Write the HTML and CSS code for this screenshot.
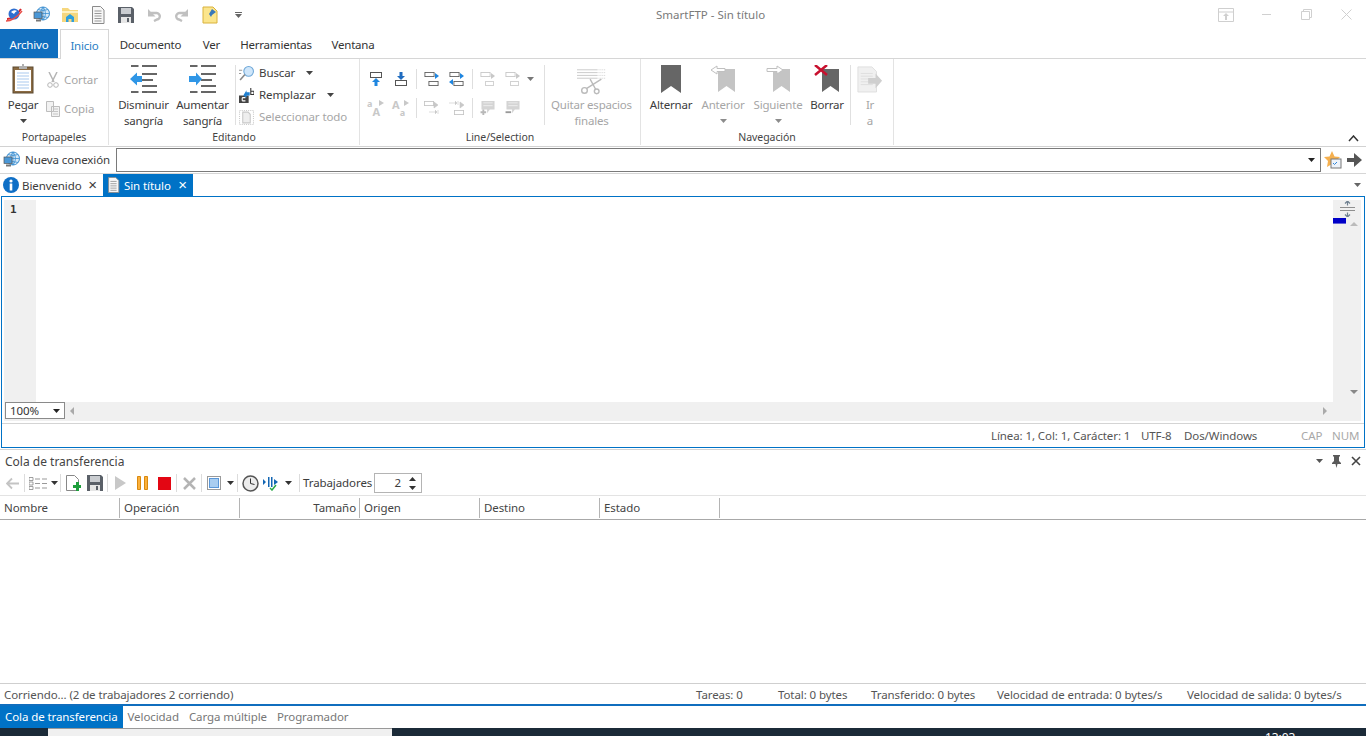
FILE: index.html
```html
<!DOCTYPE html>
<html lang="es">
<head>
<meta charset="utf-8">
<title>SmartFTP - Sin título</title>
<link rel="stylesheet" href="styles.css">
</head>
<body>
<svg class="defs" width="0" height="0" aria-hidden="true">
  <symbol id="globe" viewBox="0 0 18 18">
    <circle cx="10" cy="7.5" r="6.5" fill="#d6e9f8" stroke="#3a8ed0"/>
    <path d="M3.5 7.5h13M10 1v13M5 3.5q5 2 10 0M5 11.5q5-2 10 0M10 1q-5 6.500 0 13M10 1q5 6.500 0 13" fill="none" stroke="#3a8ed0" stroke-width=".8"/>
    <rect x="1" y="6" width="8" height="6.500" fill="#4a97d6" stroke="#555" stroke-width=".7"/>
    <path d="M3 13.500h5v2H3z" fill="#777"/>
  </symbol>
  <symbol id="doc" viewBox="0 0 14 18">
    <path d="M1.500.5h8l3.500 3.500v13.500H1.500z" fill="#f7f7f7" stroke="#8a8a8a"/>
    <path d="M3.500 5h7M3.500 7.500h7M3.500 10h7M3.500 12.500h7M3.500 15h7" stroke="#999"/>
  </symbol>
  <symbol id="save" viewBox="0 0 16 16">
    <path d="M0 0h14l2 2v14H0z" fill="#5a6068"/>
    <rect x="3" y="1" width="10" height="6" fill="#c9ccd0"/>
    <rect x="3" y="10" width="10" height="6" fill="#e6e6e6"/>
    <rect x="9" y="11" width="2" height="4" fill="#5a6068"/>
  </symbol>
  <symbol id="ind" viewBox="0 0 28 28">
    <path d="M1 0h7.500v2H1zM12 0h15v2H12zM12 8h15v2H12zM12 14h11v2H12zM12 20h15v2H12zM1 26h7.500v2H1zM12 26h15v2H12z" fill="#666"/>
  </symbol>
  <symbol id="slot" viewBox="0 0 12 6">
    <rect x=".5" y=".5" width="11" height="5" fill="#fff" stroke="currentColor"/>
  </symbol>
  <symbol id="mark" viewBox="0 0 20 28">
    <path d="M0 0h20v28L10 21 0 28z" fill="currentColor"/>
  </symbol>
  <symbol id="caret" viewBox="0 0 7 4">
    <path d="M0 0h7L3.500 4z" fill="currentColor"/>
  </symbol>
  <symbol id="undo" viewBox="0 0 14 14">
    <path d="M4 5h5a3.200 3.200 0 0 1 1 6.500L7 13" fill="none" stroke="#c0c0c0" stroke-width="2.400"/>
    <path d="M1 1v7.500h7.500z" fill="#c0c0c0"/>
  </symbol>
</svg>

<header class="titlebar">
  <div class="quick">
    <span class="qbtn"><svg class="i18" viewBox="0 0 18 18"><path d="M2 13Q9 13 16 3" fill="none" stroke="#d8262c" stroke-width="2"/><circle cx="9" cy="8" r="5.500" fill="#2f6fd0"/><path d="M6 6q3-3 6-1-2 1-3 3z" fill="#fff"/><path d="M1 15Q9 15 17 5" fill="none" stroke="#e8504a" stroke-width="1.500"/></svg></span>
    <span class="qbtn"><svg class="i18"><use href="#globe"/></svg></span>
    <span class="qbtn"><svg class="i18" viewBox="0 0 18 18"><path d="M1 2h6l2 2h8v12H1z" fill="#f6d77e"/><path d="M1 5h16v2H1z" fill="#fff2c2"/><path d="M5 11l4-3 4 3v5h-2.500v-3h-3v3H5z" fill="#2f9fdc"/></svg></span>
    <span class="qbtn"><svg class="i18"><use href="#doc"/></svg></span>
    <span class="qbtn"><svg class="i16"><use href="#save"/></svg></span>
    <span class="qbtn"><svg class="i14"><use href="#undo"/></svg></span>
    <span class="qbtn"><svg class="i14 flip"><use href="#undo"/></svg></span>
    <span class="qbtn"><svg class="i18" viewBox="0 0 18 18"><path d="M2 1h10l4 4v12H2z" fill="#fbe58c" stroke="#d9b23c"/><path d="M8 8l3-5 4 3-4 3-1 2z" fill="#3a78b8"/></svg></span>
    <span class="qbtn"><svg class="caret-lined" viewBox="0 0 7 6"><path d="M0 0h7v1H0zM0 2h7L3.500 6z" fill="#666"/></svg></span>
  </div>
  <div class="title">SmartFTP - Sin título</div>
  <div class="winctl">
    <span class="wbtn"><svg class="i16" viewBox="0 0 16 14"><path d="M.5.500h15v13H.5zM.5 4h15" fill="#fff" stroke="#cfcfcf"/><path d="M8 5l3 3H9v4H7V8H5z" fill="#cfcfcf"/></svg></span>
    <span class="wbtn"><svg class="i11" viewBox="0 0 11 11"><path d="M1 5.500h9" stroke="#d0d0d0"/></svg></span>
    <span class="wbtn"><svg class="i11" viewBox="0 0 11 11"><path d="M2.500 2.500V.5h8v8h-2M.5 2.500h8v8h-8z" fill="none" stroke="#d0d0d0"/></svg></span>
    <span class="wbtn"><svg class="i11" viewBox="0 0 11 11"><path d="M.5.500l10 10M10.500.5l-10 10" stroke="#d0d0d0"/></svg></span>
  </div>
</header>

<nav class="tabs">
  <span class="tab-file">Archivo</span>
  <span class="tab tab-on">Inicio</span>
  <span class="tab tab-doc">Documento</span>
  <span class="tab tab-ver">Ver</span>
  <span class="tab tab-her">Herramientas</span>
  <span class="tab">Ventana</span>
</nav>

<section class="ribbon">
  <div class="group g-clip">
    <div class="group-body">
      <div class="large w-pegar">
        <svg class="big-icon clip-icon" viewBox="0 0 22 30"><rect x="1" y="3" width="20" height="26" fill="#8a6a42" stroke="#5c4a30"/><rect x="3" y="6" width="16" height="21" fill="#fff"/><path d="M5 9h12M5 12h12M5 15h12M5 18h12M5 21h12M5 24h12" stroke="#a9c9ee"/><path d="M7 2h3V0h2v2h3v3H7z" fill="#b0b0b0"/></svg>
        <span class="lbl">Pegar</span>
        <svg class="caret"><use href="#caret"/></svg>
      </div>
      <div class="small-stack">
        <div class="small off"><svg class="s-icon" viewBox="0 0 14 16"><path d="M3 0l5 10M11 0L6 10" stroke="#b5b5b5" stroke-width="1.500"/><circle cx="4" cy="13" r="2.300" fill="none" stroke="#b5b5b5"/><circle cx="10" cy="13" r="2.300" fill="none" stroke="#b5b5b5"/></svg>Cortar</div>
        <div class="small off"><svg class="s-icon" viewBox="0 0 14 16"><path d="M.5.500h7v10h-7zM5.500 5.500h8v10h-8z" fill="#f2f2f2" stroke="#bdbdbd"/><path d="M7 8h5M7 10.500h5M7 13h5" stroke="#c4c4c4"/></svg>Copia</div>
      </div>
    </div>
    <div class="group-name">Portapapeles</div>
  </div>

  <div class="group g-edit">
    <div class="group-body">
      <div class="large w-ind">
        <svg class="big-icon"><use href="#ind"/><path d="M0 14l7-6.500V11h5v6H7v3.500z" fill="#2f96e6"/></svg>
        <span class="lbl">Disminuir</span><span class="lbl">sangría</span>
      </div>
      <div class="large w-ind">
        <svg class="big-icon"><use href="#ind"/><path d="M13 14L7 7.500V11H0v6h7v3.500z" fill="#2f96e6"/></svg>
        <span class="lbl">Aumentar</span><span class="lbl">sangría</span>
      </div>
      <div class="vsep vsep-edit"></div>
      <div class="small-stack tight">
        <div class="small"><svg class="s-icon" viewBox="0 0 14 14"><circle cx="9" cy="5" r="4.500" fill="#cfe6fa" stroke="#6fa8d8"/><path d="M5.500 8L1 13" stroke="#888" stroke-width="1.500"/><path d="M0 4h3M0 7h2" stroke="#999"/></svg>Buscar<svg class="caret inline"><use href="#caret"/></svg></div>
        <div class="small"><svg class="s-icon" viewBox="0 0 14 14"><rect x="0" y="7" width="9" height="7" fill="#444"/><path d="M4 7l3-5v2h3v3H7v2z" fill="#1f7fd0"/><path d="M11 0v6h3V3h-3" fill="none" stroke="#333"/><path d="M3 9h3M3 12h3M3 9v3" stroke="#fff" fill="none"/></svg>Remplazar<svg class="caret inline"><use href="#caret"/></svg></div>
        <div class="small off"><svg class="s-icon" viewBox="0 0 14 14"><rect x=".5" y=".5" width="13" height="13" fill="none" stroke="#ccc" stroke-dasharray="1 1"/><path d="M3.500 2h5l2 2v8h-7z" fill="#eee" stroke="#c8c8c8"/></svg>Seleccionar todo</div>
      </div>
    </div>
    <div class="group-name">Editando</div>
  </div>

  <div class="group g-line">
    <div class="group-body">
      <div class="icon-grid">
        <div class="icon-row">
          <span class="gbtn blue"><svg viewBox="0 0 16 14"><use href="#slot" width="12" height="6" x="2" y="0"/><path d="M8 6l4 4H9.500v4h-3v-4H4z" fill="#1f86e0"/></svg></span>
          <span class="gbtn blue"><svg viewBox="0 0 16 14"><use href="#slot" width="12" height="6" x="2" y="8"/><path d="M8 8l4-4H9.500V0h-3v4H4z" fill="#1f6cc0"/></svg></span>
          <i class="sep"></i>
          <span class="gbtn blue"><svg viewBox="0 0 16 14"><use href="#slot" width="11" height="5" y="0"/><use href="#slot" width="11" height="5" x="4" y="9"/><path d="M11 1l4 3-4 3z" fill="#1f86e0"/></svg></span>
          <span class="gbtn blue"><svg viewBox="0 0 16 14"><use href="#slot" width="11" height="5" y="0"/><use href="#slot" width="11" height="5" x="4" y="9"/><path d="M11 1l4 3-4 3zM4 7L0 10l4 3z" fill="#1f86e0"/></svg></span>
          <i class="sep"></i>
          <span class="gbtn"><svg viewBox="0 0 16 14"><use href="#slot" width="11" height="5" y="0"/><use href="#slot" width="9" height="5" x="5" y="9"/><path d="M11 1l4 3-4 3z" fill="#c8c8c8"/></svg></span>
          <span class="gbtn"><svg viewBox="0 0 16 14"><use href="#slot" width="11" height="5" y="0"/><use href="#slot" width="9" height="5" x="5" y="9"/><path d="M11 1l4 3-4 3z" fill="#c8c8c8"/></svg></span>
          <svg class="caret grid-caret"><use href="#caret"/></svg>
        </div>
        <div class="icon-row">
          <span class="gbtn aa"><span class="aa-small">a</span><span class="aa-big aa-end">A</span><svg class="aa-arrow" viewBox="0 0 5 6"><path d="M0 0l5 3-5 3z" fill="#c8c8c8"/></svg></span>
          <span class="gbtn aa"><span class="aa-big">A</span><span class="aa-small aa-end">a</span><svg class="aa-arrow" viewBox="0 0 5 6"><path d="M0 0l5 3-5 3z" fill="#c8c8c8"/></svg></span>
          <i class="sep"></i>
          <span class="gbtn"><svg viewBox="0 0 16 14"><use href="#slot" width="10" height="5" y="0"/><path d="M10 1l4 3-4 3zM5 11h6M11 9l2 2-2 2M14 9v4" fill="#c8c8c8" stroke="#c8c8c8" stroke-width=".6"/></svg></span>
          <span class="gbtn"><svg viewBox="0 0 16 14"><use href="#slot" width="10" height="5" x="5" y="9"/><path d="M0 2h6M6 0l2 2-2 2M9 0v4M11 1l4 3-4 3z" fill="#c8c8c8" stroke="#c8c8c8" stroke-width=".6"/></svg></span>
          <i class="sep"></i>
          <span class="gbtn"><svg viewBox="0 0 16 15"><path d="M1 0h14v9H10l-3 4v-4H1z" fill="#d4d4d4"/><path d="M3 2h10M3 5h10" stroke="#eee"/><path d="M0 11h6v2H0zM2 9h2v6H2z" fill="#b8b8b8"/></svg></span>
          <span class="gbtn"><svg viewBox="0 0 16 15"><path d="M1 0h14v9H10l-3 4v-4H1z" fill="#d4d4d4"/><path d="M3 2h10M3 5h10" stroke="#eee"/><path d="M0 11h6v2H0z" fill="#999"/></svg></span>
        </div>
      </div>
      <div class="vsep"></div>
      <div class="large off w-trim">
        <svg class="big-icon trim-icon" viewBox="0 0 32 27"><path d="M0 1h22M0 4h22M0 7h22M0 10h22" stroke="#c9c9c9"/><path d="M23 1h8M23 4h8M23 7h8M23 10h8" stroke="#d0d0d0" stroke-dasharray="1 1"/><path d="M26 11L10 21M14 11l6 11" stroke="#bbb" stroke-width="1.500"/><circle cx="8" cy="23" r="3" fill="none" stroke="#bbb" stroke-width="1.500"/><circle cx="21" cy="24" r="2.500" fill="none" stroke="#bbb" stroke-width="1.500"/></svg>
        <span class="lbl">Quitar espacios</span><span class="lbl">finales</span>
      </div>
    </div>
    <div class="group-name">Line/Selection</div>
  </div>

  <div class="group g-nav">
    <div class="group-body">
      <div class="large w-alt">
        <svg class="big-icon mark-icon"><use href="#mark"/></svg>
        <span class="lbl">Alternar</span>
      </div>
      <div class="large off w-ant">
        <svg class="big-icon nav-icon" viewBox="0 0 26 28"><path d="M8 4h17v23l-8.500-6L8 27z" fill="#c4c4c4"/><path d="M1 5l6-4v2.500h8v3H7V9z" fill="#fff" stroke="#c0c0c0"/></svg>
        <span class="lbl">Anterior</span>
        <svg class="caret"><use href="#caret"/></svg>
      </div>
      <div class="large off w-sig">
        <svg class="big-icon nav-icon" viewBox="0 0 26 28"><path d="M8 4h17v23l-8.500-6L8 27z" fill="#c4c4c4"/><path d="M18 5l-6-4v2.500H2v3h10V9z" fill="#fff" stroke="#c0c0c0"/></svg>
        <span class="lbl">Siguiente</span>
        <svg class="caret"><use href="#caret"/></svg>
      </div>
      <div class="large w-bor">
        <svg class="big-icon nav-icon" viewBox="0 0 26 28"><path d="M8 4h17v23l-8.500-6L8 27z" fill="#666"/><path d="M1 0l12 10M13 0L1 10" stroke="#c8102e" stroke-width="2.500"/></svg>
        <span class="lbl">Borrar</span>
      </div>
      <div class="vsep vsep-nav"></div>
      <div class="large off w-ir">
        <svg class="big-icon nav-icon" viewBox="0 0 28 28"><path d="M1 1h15l5 5v22H1z" fill="#f0f0f0" stroke="#ddd"/><path d="M4 8h13M4 11h13M4 14h13M4 17h13M4 20h13" stroke="#ddd"/><path d="M12 13h8V8l7 8-7 8v-5h-8z" fill="#cfcfcf"/></svg>
        <span class="lbl">Ir</span><span class="lbl">a</span>
      </div>
    </div>
    <div class="group-name">Navegación</div>
  </div>
  <svg class="collapse" viewBox="0 0 11 7"><path d="M1 6l4.500-5L10 6" fill="none" stroke="#333" stroke-width="1.500"/></svg>
</section>

<div class="addr">
  <svg class="i18 addr-globe"><use href="#globe"/></svg>
  <span class="addr-label">Nueva conexión</span>
  <div class="addr-input"><svg class="caret dark-c"><use href="#caret"/></svg></div>
  <svg class="i18 addr-star" viewBox="0 0 18 18"><path d="M8 0l2.500 5.500L16 6l-4 4 1 6-5-3-5 3 1-6-4-4 5.500-.5z" fill="#f5b04f"/><rect x="7" y="8" width="10" height="9" fill="#eef3fa" stroke="#777"/><path d="M9 12l1.500 1.500L13 11" fill="none" stroke="#2f86d8"/></svg>
  <svg class="addr-go" viewBox="0 0 15 14"><path d="M0 5h7V0l8 7-8 7V9H0z" fill="#555"/></svg>
</div>

<div class="doctabs">
  <span class="dtab">
    <svg class="i16" viewBox="0 0 16 16"><circle cx="8" cy="8" r="8" fill="#0f6fc6"/><rect x="6.700" y="6.500" width="2.600" height="7" fill="#fff"/><circle cx="8" cy="4" r="1.600" fill="#fff"/></svg>
    <span class="dtab-text">Bienvenido</span><b class="x">×</b>
  </span>
  <span class="dtab dtab-on">
    <svg class="i-doc"><use href="#doc"/></svg>
    <span class="dtab-text">Sin título</span><b class="x">×</b>
  </span>
  <svg class="caret strip-caret"><use href="#caret"/></svg>
</div>

<main class="editor">
  <div class="edit-area">
    <div class="gutter">1</div>
    <div class="code"></div>
    <div class="vscroll">
      <svg class="split" viewBox="0 0 15 16"><path d="M0 6.500h15M0 9.500h15" stroke="#8f8f8f" stroke-width="1.200"/><path d="M7.500 0v4.500M5 2.500l2.500-2.500 2.500 2.500M7.500 11.500v4.500M5 13.500l2.500 2.500 2.500-2.500" fill="none" stroke="#6f8090" stroke-width="1.200"/></svg>
      <div class="mark-row"><i class="bluemark"></i><svg class="sc-arrow sc-up" viewBox="0 0 8 4"><path d="M4 0l4 4H0z" fill="#bbb"/></svg></div>
      <svg class="sc-arrow sc-down" viewBox="0 0 8 4"><path d="M4 4l4-4H0z" fill="#888"/></svg>
    </div>
  </div>
  <div class="hscroll">
    <div class="zoombox">100%<svg class="caret dark-c"><use href="#caret"/></svg></div>
    <svg class="h-arrow h-left" viewBox="0 0 4 8"><path d="M0 4l4-4v8z" fill="#aaa"/></svg>
    <svg class="h-arrow h-right" viewBox="0 0 4 8"><path d="M4 4L0 0v8z" fill="#aaa"/></svg>
  </div>
  <div class="edit-status">
    <span class="es-pos">Línea: 1, Col: 1, Carácter: 1</span>
    <span class="es-enc">UTF-8</span>
    <span class="es-eol">Dos/Windows</span>
    <span class="es-cap">CAP</span>
    <span class="es-num">NUM</span>
  </div>
</main>

<section class="panel">
  <div class="panel-title">
    <span class="panel-name">Cola de transferencia</span>
    <svg class="caret panel-caret"><use href="#caret"/></svg>
    <svg class="pin" viewBox="0 0 9 13"><path d="M1 0h7v1L7 2v4l2 2v1H5.500L4.500 13 3.500 9H0V8l2-2V2L1 1z" fill="#5a5a5a"/></svg>
    <svg class="close" viewBox="0 0 10 10"><path d="M1 1l8 8M9 1l-8 8" stroke="#444" stroke-width="1.600"/></svg>
  </div>
  <div class="toolbar">
    <span class="tb w-back"><svg viewBox="0 0 13 12" class="t13"><path d="M6 1L1 6l5 5M1 6h12" fill="none" stroke="#c4c4c4" stroke-width="1.800"/></svg></span>
    <i class="tsep"></i>
    <span class="tb w-list"><svg viewBox="0 0 18 13" class="t18"><path d="M0 .5h4v3H0zM0 5h4v3H0zM0 9.500h4v3H0z" fill="none" stroke="#888" stroke-width=".8"/><path d="M6 2h5M13 2h5M6 6.500h5M13 6.500h5M6 11h5M13 11h5" stroke="#999" stroke-width="1.200"/></svg><svg class="caret tcaret"><use href="#caret"/></svg></span>
    <i class="tsep"></i>
    <span class="tb w-22 lead"><svg viewBox="0 0 15 17" class="t15"><path d="M.5.500h8l4 4v11H.5z" fill="#fff" stroke="#888"/><path d="M10 7h3v3h3v3h-3v3h-3v-3H7v-3h3z" fill="#1e9e3c"/></svg></span>
    <span class="tb w-22"><svg class="t16"><use href="#save"/></svg></span>
    <i class="tsep lead"></i>
    <span class="tb w-22 lead"><svg viewBox="0 0 11 14" class="t11"><path d="M0 0l11 7-11 7z" fill="#c8c8c8"/></svg></span>
    <span class="tb w-22"><svg viewBox="0 0 11 14" class="t11"><path d="M.5.500h3v13h-3zM7.500.5h3v13h-3z" fill="#fbb03b" stroke="#d9890f"/></svg></span>
    <span class="tb w-22"><svg viewBox="0 0 13 13" class="t13"><rect width="13" height="13" fill="#e30613"/></svg></span>
    <i class="tsep lead"></i>
    <span class="tb w-24"><svg viewBox="0 0 13 13" class="t13"><path d="M1 1l11 11M12 1L1 12" stroke="#b4b4b4" stroke-width="2.500"/></svg></span>
    <i class="tsep"></i>
    <span class="tb w-box"><svg viewBox="0 0 14 14" class="t14"><rect x=".5" y=".5" width="13" height="13" fill="#fff" stroke="#9a9a9a"/><rect x="2.500" y="2.500" width="9" height="9" fill="#a9cdf0" stroke="#5a97d8"/></svg><svg class="caret tcaret"><use href="#caret"/></svg></span>
    <i class="tsep"></i>
    <span class="tb w-clock"><svg viewBox="0 0 17 17" class="t17"><circle cx="8.500" cy="8.500" r="7.500" fill="#ececec" stroke="#555" stroke-width="1.500"/><path d="M8.500 3.500v5l4 1" fill="none" stroke="#333"/></svg></span>
    <span class="tb w-work"><svg viewBox="0 0 16 14" class="t16"><path d="M0 3l3 3-3 3zM5 1h1.500v10H5zM8 1h1.500v10H8z" fill="#1366b3"/><path d="M11 3l4 3-4 3z" fill="#1366b3"/><path d="M7 12l2 2 4-5" fill="none" stroke="#2aa846" stroke-width="1.500"/></svg><svg class="caret tcaret"><use href="#caret"/></svg></span>
    <i class="tsep"></i>
    <span class="workers">Trabajadores</span>
    <div class="spinner"><span class="spin-val">2</span><span class="spin-btns"><svg class="spin-a" viewBox="0 0 7 4"><path d="M3.500 0L7 4H0z" fill="#333"/></svg><svg class="spin-a" viewBox="0 0 7 4"><path d="M3.500 4L7 0H0z" fill="#333"/></svg></span></div>
  </div>
  <div class="colhead">
    <span class="col">Nombre</span>
    <span class="col">Operación</span>
    <span class="col col-r">Tamaño</span>
    <span class="col">Origen</span>
    <span class="col">Destino</span>
    <span class="col">Estado</span>
  </div>
  <div class="list"></div>
  <div class="statusbar">
    <span class="st-run">Corriendo... (2 de trabajadores 2 corriendo)</span>
    <span class="st-tar">Tareas: 0</span>
    <span class="st-tot">Total: 0 bytes</span>
    <span class="st-tra">Transferido: 0 bytes</span>
    <span class="st-ent">Velocidad de entrada: 0 bytes/s</span>
    <span>Velocidad de salida: 0 bytes/s</span>
  </div>
  <div class="bottomtabs">
    <span class="btab btab-on">Cola de transferencia</span>
    <span class="btab">Velocidad</span>
    <span class="btab">Carga múltiple</span>
    <span class="btab">Programador</span>
  </div>
</section>

<footer class="taskbar">
  <div class="task-app"></div>
  <div class="task-clock">13:03</div>
</footer>
</body>
</html>
```
FILE: styles.css
```css
* { box-sizing: border-box; }
html, body { margin: 0; height: 736px; overflow: hidden; }
body {
  display: flex;
  flex-direction: column;
  width: 1366px;
  background: #fff;
  color: #3c3c3c;
  font: 11.5px/16px "Noto Sans", "Open Sans", sans-serif;
  letter-spacing: -.09px;
}
svg { display: block; flex: none; }
.defs { position: absolute; }

.i18 { width: 18px; height: 18px; }
.i16 { width: 16px; height: 16px; }
.i14 { width: 14px; height: 14px; }
.i11 { width: 11px; height: 11px; }
.flip { transform: scaleX(-1); }

/* title bar */
.titlebar { display: flex; align-items: center; height: 29px; flex: none; }
.quick { display: flex; width: 252px; }
.qbtn { display: flex; align-items: center; justify-content: center; width: 28px; height: 28px; }
.caret-lined { width: 7px; height: 6px; }
.title { margin-left: 404px; color: #7a7a7a; letter-spacing: 0; }
.winctl { display: flex; margin-left: auto; }
.wbtn { display: flex; align-items: center; justify-content: center; width: 40px; height: 28px; }

/* menu tabs */
.tabs { display: flex; align-items: stretch; height: 30px; flex: none; border-bottom: 1px solid #d6d6d6; color: #333; letter-spacing: -.2px; }
.tabs span { display: flex; align-items: center; justify-content: center; padding-top: 2px; }
.tab-file { width: 58px; background: #106ebe; color: #fff; }
.tab-on { width: 49px; margin: 0 0 -1px 2px; background: #fff; border: 1px solid #d6d6d6; border-bottom: 0; color: #2a7fc4; }
.tab-doc { width: 63px; margin-left: 10px; }
.tab-ver { margin-left: 21px; width: 17px; }
.tab-her { margin-left: 21px; width: 70px; }
.tabs .tab:last-child { margin-left: 21px; width: 42px; }

/* ribbon */
.ribbon { display: flex; height: 88px; flex: none; border-bottom: 1px solid #d2d2d2; position: relative; }
.group { display: flex; flex-direction: column; border-right: 1px solid #e3e3e3; height: 86px; flex: none; }
.group-body { display: flex; height: 71px; flex: none; }
.group-name { text-align: center; height: 15px; line-height: 15px; font-size: 10.5px; color: #444; letter-spacing: -.05px; }
.g-clip { width: 109px; }
.g-edit { width: 251px; }
.g-line { width: 281px; }
.g-nav { width: 253px; }
.large { display: flex; flex-direction: column; align-items: center; padding-top: 6px; flex: none; }
.lbl { height: 16px; line-height: 16px; white-space: nowrap; letter-spacing: -.2px; }
.big-icon { width: 28px; height: 28px; margin-bottom: 4px; }
.caret { width: 7px; height: 4px; color: #444; }
.large .caret { margin-top: 6px; }
.off { color: #a6a6a6; }
.off .caret { color: #8c8c8c; }
.w-pegar { width: 46px; }
.clip-icon { width: 22px; height: 30px; margin-bottom: 3px; margin-top: -1px; }
.small-stack { display: flex; flex-direction: column; padding-top: 13px; gap: 13px; }
.small { display: flex; align-items: center; height: 16px; white-space: nowrap; }
.s-icon { width: 14px; height: 16px; margin-right: 4px; }
.w-ind { width: 59px; }
.g-edit .w-ind:first-child { margin-left: 5px; }
.vsep { width: 1px; background: #e0e0e0; height: 60px; margin-top: 6px; flex: none; }
.vsep-edit { margin: 6px 3px 0; }
.tight { padding-top: 6px; gap: 6px; }
.tight .s-icon { width: 15px; height: 15px; margin-right: 5px; }
.inline { margin-left: 11px; }

.icon-grid { display: flex; flex-direction: column; width: 184px; gap: 13px; padding: 12px 0 0 3px; }
.icon-row { display: flex; align-items: center; height: 16px; }
.gbtn { display: flex; justify-content: center; width: 25px; color: #c4c4c4; }
.gbtn svg { width: 16px; height: 14px; }
.gbtn.blue { color: #555; }
.sep { width: 1px; height: 20px; background: #dedede; flex: none; }
.icon-row .sep { margin: 0 2.500px; }
.grid-caret { margin-left: 2px; color: #777; }
.gbtn.aa { position: relative; height: 18px; padding: 0 4px; justify-content: flex-start; color: #c8c8c8; font-weight: 700; letter-spacing: 0; }
.aa-small { font-size: 9px; line-height: 9px; }
.aa-big { font-size: 11px; line-height: 11px; }
.aa-end { align-self: flex-end; }
.gbtn svg.aa-arrow { position: absolute; right: 4px; top: 1px; width: 5px; height: 6px; }
.w-trim { width: 93px; }
.trim-icon { width: 30px; height: 27px; margin: 3px 0 2px; }

.mark-icon { width: 20px; height: 28px; color: #666; }
.nav-icon { width: 26px; height: 28px; }
.w-alt { width: 60px; }
.w-ant { width: 44px; }
.w-sig { width: 66px; }
.w-bor { width: 32px; }
.vsep-nav { margin-left: 7px; }
.w-ir { width: 38px; }
.collapse { position: absolute; right: 7px; bottom: 4px; width: 11px; height: 7px; }

/* address bar */
.addr { display: flex; align-items: center; height: 27px; flex: none; border-bottom: 1px solid #d6d6d6; padding-left: 3px; }
.addr-globe { margin-right: 4px; }
.addr-label { width: 91px; }
.addr-input { display: flex; align-items: center; justify-content: flex-end; width: 1205px; height: 24px; border: 1px solid #7a7a7a; padding-right: 5px; }
.dark-c { color: #222; }
.addr-star { margin-left: 3px; }
.addr-go { width: 15px; height: 14px; margin-left: 5px; }

/* document tabs */
.doctabs { display: flex; align-items: stretch; height: 22px; flex: none; }
.dtab { display: flex; align-items: center; gap: 3px; padding: 0 0 0 3px; width: 103px; white-space: nowrap; }
.dtab-text { padding-top: 2px; }
.dtab-on { width: 90px; background: #0072c6; color: #fff; padding-left: 4px; }
.i-doc { width: 13px; height: 16px; margin-right: 1px; }
.x { font: 400 15px/16px "Liberation Sans", sans-serif; margin-left: auto; margin-right: 6px; }
.strip-caret { margin: 9px 5px 0 auto; color: #666; }

/* editor */
.editor { display: flex; flex-direction: column; height: 252px; flex: none; margin: 0 1px; border: 1px solid #0072c6; }
.edit-area { display: flex; height: 205px; flex: none; padding: 3px 3px 0 2px; }
.gutter { width: 32px; background: #f0f0f0; font: 700 11px/20px "DejaVu Sans Mono", monospace; padding-left: 6px; color: #333; letter-spacing: 0; }
.code { flex: 1; }
.vscroll { display: flex; flex-direction: column; align-items: flex-end; width: 28px; background: #f0f0f0; }
.split { width: 15px; height: 16px; margin: 1px 6px 0 0; }
.mark-row { display: flex; align-items: flex-start; width: 28px; margin-top: 1px; height: 8px; }
.bluemark { display: block; width: 13px; height: 6px; background: #0000c8; border-bottom: 1px solid #6464d8; }
.sc-arrow { width: 8px; height: 4px; margin-left: 4px; }
.sc-up { margin-top: 4px; }
.sc-down { margin: 164px 3px 0 0; }
.hscroll { display: flex; align-items: center; height: 19px; flex: none; margin: 0 3px 0 2px; padding-bottom: 2px; background: #f0f0f0; }
.zoombox { display: flex; align-items: center; justify-content: space-between; width: 60px; height: 17px; background: #fff; border: 1px solid #8a8a8a; padding: 0 4px; margin-left: 1px; color: #333; }
.h-arrow { width: 4px; height: 8px; }
.h-left { margin-left: 5px; }
.h-right { margin-left: auto; margin-right: 34px; }
.edit-status { display: flex; align-items: center; height: 24px; flex: none; margin-top: 2px; border-top: 1px solid #d4d4d4; color: #555; }
.es-pos { margin-left: 989px; width: 150px; }
.es-enc { width: 43px; }
.es-eol { width: 117px; }
.es-cap { color: #a8a8a8; width: 31px; }
.es-num { color: #a8a8a8; }

/* panel */
.panel { display: flex; flex-direction: column; flex: 1; margin-top: 1px; border-top: 1px solid #d4d4d4; min-height: 0; }
.panel-title { display: flex; align-items: center; height: 22px; flex: none; padding: 0 5px; }
.panel-name { font-size: 12px; color: #444; letter-spacing: 0; padding-top: 2px; }
.panel-caret { margin-left: auto; color: #555; }
.pin { width: 9px; height: 13px; margin-left: 9px; }
.close { width: 10px; height: 10px; margin-left: 10px; }
.toolbar { display: flex; align-items: center; height: 22px; flex: none; }
.tb { display: flex; align-items: center; justify-content: center; height: 20px; color: #333; }
.lead { margin-left: 1px; }
.t13 { width: 13px; height: 13px; }
.t18 { width: 18px; height: 13px; }
.t15 { width: 15px; height: 17px; }
.t16 { width: 16px; height: 16px; }
.t11 { width: 11px; height: 14px; }
.t14 { width: 14px; height: 14px; }
.t17 { width: 17px; height: 17px; }
.tsep { width: 1px; height: 18px; background: #dcdcdc; flex: none; }
.tcaret { color: #333; }
.w-back { width: 24px; }
.w-list { width: 35px; justify-content: flex-start; padding-left: 4px; gap: 4px; }
.w-22 { width: 22px; }
.w-24 { width: 24px; }
.w-box { width: 35px; justify-content: flex-start; padding-left: 5px; gap: 6px; }
.w-clock { width: 24px; }
.w-work { width: 37px; justify-content: flex-start; padding-left: 1px; gap: 6px; }
.workers { margin-left: 3px; width: 71px; }
.spinner { display: flex; align-items: center; justify-content: flex-end; width: 48px; height: 20px; border: 1px solid #b4b4b4; }
.spin-val { margin-right: 8px; }
.spin-btns { display: flex; flex-direction: column; gap: 5px; margin-right: 5px; }
.spin-a { width: 7px; height: 4px; }
.colhead { display: flex; height: 25px; flex: none; margin-top: 1px; border-top: 1px solid #e3e3e3; border-bottom: 1px solid #a8a8a8; align-items: center; }
.col { display: flex; align-items: center; width: 120px; height: 20px; padding-left: 4px; border-right: 1px solid #b4b4b4; color: #444; }
.col-r { justify-content: flex-end; padding-right: 3px; }
.list { flex: 1; }
.statusbar { display: flex; align-items: center; height: 23px; flex: none; border-top: 1px solid #cfcfcf; border-bottom: 2px solid #106ebe; padding: 2px 0 0 4px; color: #555; }
.st-run { width: 692px; }
.st-tar { width: 82px; }
.st-tot { width: 93px; }
.st-tra { width: 126px; }
.st-ent { width: 190px; }
.bottomtabs { display: flex; height: 22px; flex: none; color: #777; }
.btab { display: flex; align-items: center; padding: 0 5px; }
.btab-on { background: #0072c6; color: #fff; }
.taskbar { display: flex; height: 8px; flex: none; background: #1b2a38; overflow: hidden; }
.task-app { width: 344px; height: 8px; margin-left: 48px; background: #f0f0f0; border-top: 1px solid #999; }
.task-clock { margin-left: 873px; margin-top: 3px; color: #fff; font-size: 12px; line-height: 14px; }
```
